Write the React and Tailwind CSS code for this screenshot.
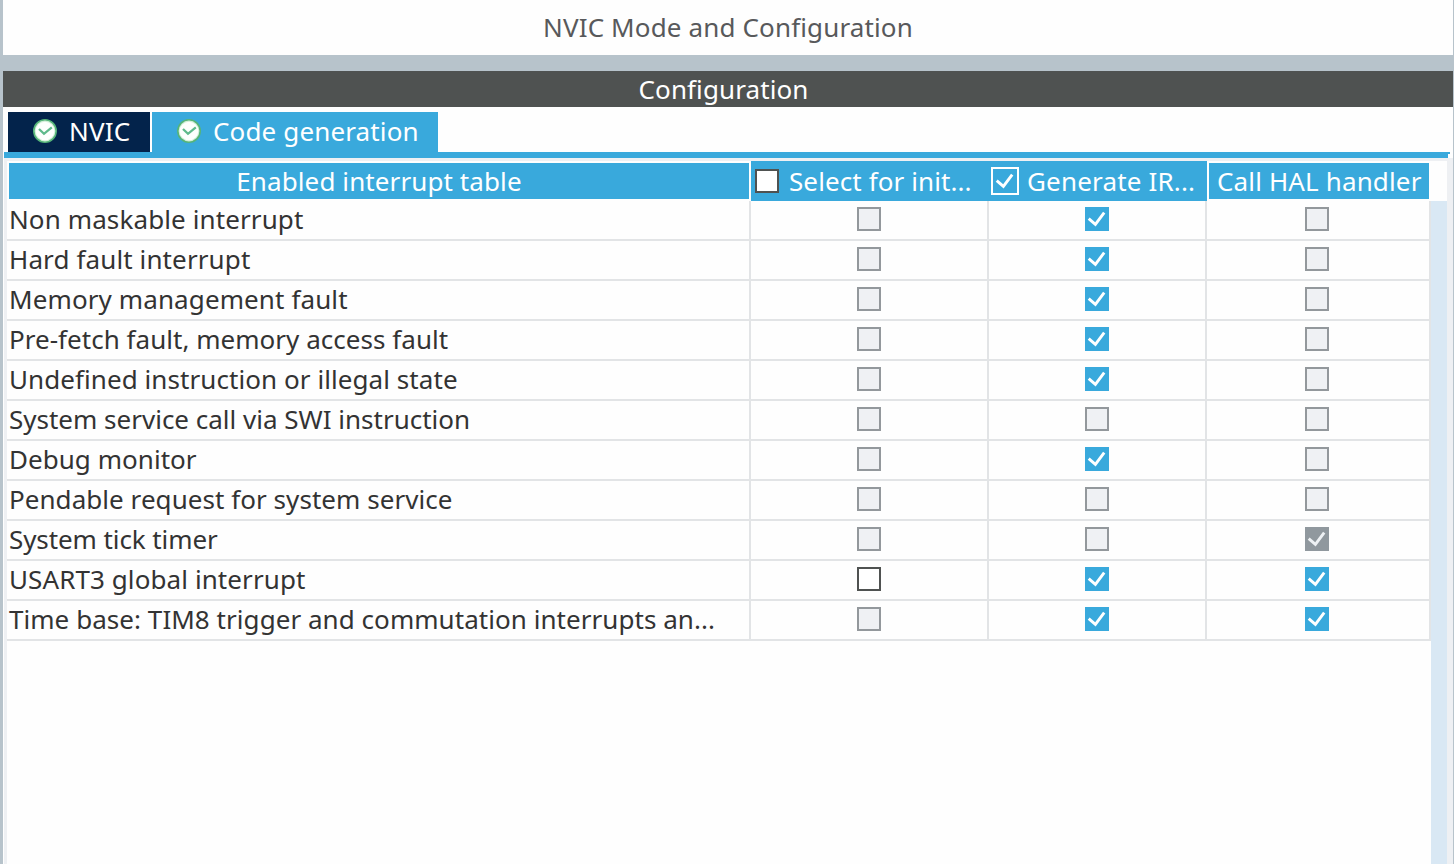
const ROWS = [
  ['Non maskable interrupt', 'off', 'on', 'off', 'tracking-[0.11px]'],
  ['Hard fault interrupt', 'off', 'on', 'off', 'tracking-[0.12px]'],
  ['Memory management fault', 'off', 'on', 'off', 'tracking-[0.11px]'],
  ['Pre-fetch fault, memory access fault', 'off', 'on', 'off', 'tracking-[0.03px]'],
  ['Undefined instruction or illegal state', 'off', 'on', 'off', 'tracking-[0.07px]'],
  ['System service call via SWI instruction', 'off', 'off', 'off', ''],
  ['Debug monitor', 'off', 'on', 'off', 'tracking-[0.04px]'],
  ['Pendable request for system service', 'off', 'off', 'off', 'tracking-[0.05px]'],
  ['System tick timer', 'off', 'off', 'locked', 'tracking-[-0.09px]'],
  ['USART3 global interrupt', 'open', 'on', 'on', 'tracking-[0.09px]'],
  ['Time base: TIM8 trigger and commutation interrupts an...', 'off', 'on', 'on', 'tracking-[0.05px]'],
];

const BOX = {
  off: 'border-2 border-[#93989c] bg-[#eff1f4]',
  open: 'border-2 border-[#4f5251] bg-white',
  on: 'bg-[#39a9dc] text-white',
  locked: 'bg-[#90989e] text-[#eef1f4]',
};

function Tick() {
  return (
    <svg viewBox="0 0 24 24" className="block size-6 shrink-0" fill="none" stroke="currentColor" strokeWidth="2.9">
      <path d="M3.7 11.6 L10.4 17.4 L19.2 5.6" />
    </svg>
  );
}

function Check({ state }) {
  return (
    <span className={'block size-6 shrink-0 ' + BOX[state]}>
      {(state === 'on' || state === 'locked') && <Tick />}
    </span>
  );
}

function StatusIcon() {
  return (
    <svg viewBox="0 0 24 24" className="block size-6 shrink-0">
      <circle cx="12" cy="12" r="11.2" fill="#d3efd9" stroke="#55b478" strokeWidth="1.6" />
      <circle cx="12" cy="12" r="9.3" fill="#fdfffd" />
      <path d="M6 10 L11 14.8 L18.8 8.4" fill="none" stroke="#5fba8b" strokeWidth="2.3" />
    </svg>
  );
}

function Cell({ state, last = false }) {
  return (
    <div className={'flex h-10 justify-center border-r-2 border-b-2 border-[#e2e4e6] pt-1.5 ' + (last ? 'pr-0.5' : '')}>
      <Check state={state} />
    </div>
  );
}

export default function App() {
  return (
    <div className="flex h-[864px] w-[1454px] flex-col overflow-hidden border-r border-l-3 border-[#b7c3cb] bg-[#fefefe] font-['Noto_Sans',sans-serif] text-[26px] leading-9 whitespace-nowrap text-[#333333]">
      <div className="h-[55px] shrink-0 pt-[9px] text-center tracking-[0.14px] text-[#58595b]">NVIC Mode and Configuration</div>
      <div className="h-4 shrink-0 bg-[#b7c3cb]" />
      <div className="h-9 shrink-0 bg-[#4f5251] pr-[9px] text-center tracking-[0.1px] text-white">Configuration</div>

      <div className="flex h-[45px] shrink-0 gap-0.5 pt-[5px] pl-[5px] text-white">
        <div className="flex h-10 w-[142px] items-start bg-[#03234b] pt-[7px] pl-[25px]">
          <StatusIcon />
          <span className="-mt-1.5 pl-3 tracking-[0.2px]">NVIC</span>
        </div>
        <div className="flex h-10 w-[286px] items-start bg-[#39a9dc] pt-[7px] pl-[25px]">
          <StatusIcon />
          <span className="-mt-1.5 pl-3 tracking-[0.14px]">Code generation</span>
        </div>
      </div>
      <div className="mr-[3px] ml-px h-0.5 shrink-0 bg-[#39a9dc]" />
      <div className="mr-[5px] ml-px h-1 shrink-0 bg-[#39a9dc]" />

      <div className="ml-px flex min-h-0 flex-1 flex-col border-t-3 border-r-6 border-l-3 border-[#eef0f3]">
        <div className="flex h-10 shrink-0 bg-[#fefefe] tracking-[0.1px] text-white">
          <div className="my-0.5 ml-0.5 w-[740px] bg-[#39a9dc] text-center">Enabled interrupt table</div>
          <div className="ml-0.5 flex w-[236px] bg-[#39a9dc] pt-2 pl-1">
            <Check state="open" />
            <span className="-mt-1.5 pl-2.5">Select for init...</span>
          </div>
          <div className="flex w-[220px] bg-[#39a9dc] pt-1.5 pl-1">
            <span className="flex size-7 shrink-0 items-center justify-center border-2 border-white">
              <Tick />
            </span>
            <span className="-mt-1 pl-2 tracking-[0.17px]">Generate IR...</span>
          </div>
          <div className="my-0.5 ml-0.5 w-[220px] bg-[#39a9dc] pl-2 tracking-[0.14px]">Call HAL handler</div>
        </div>

        <div className="flex min-h-0 flex-1">
          <div className="w-[1424px] shrink-0">
            {ROWS.map(([name, select, generate, call, tracking]) => (
              <div key={name} className="grid grid-cols-[744px_238px_218px_224px]">
                <div className={'h-10 border-r-2 border-b-2 border-[#e2e4e6] pl-0.5 ' + tracking}>{name}</div>
                <Cell state={select} />
                <Cell state={generate} />
                <Cell state={call} last />
              </div>
            ))}
          </div>
          <div className="w-4 shrink-0 bg-[#d9e8f4]" />
        </div>
      </div>
    </div>
  );
}
